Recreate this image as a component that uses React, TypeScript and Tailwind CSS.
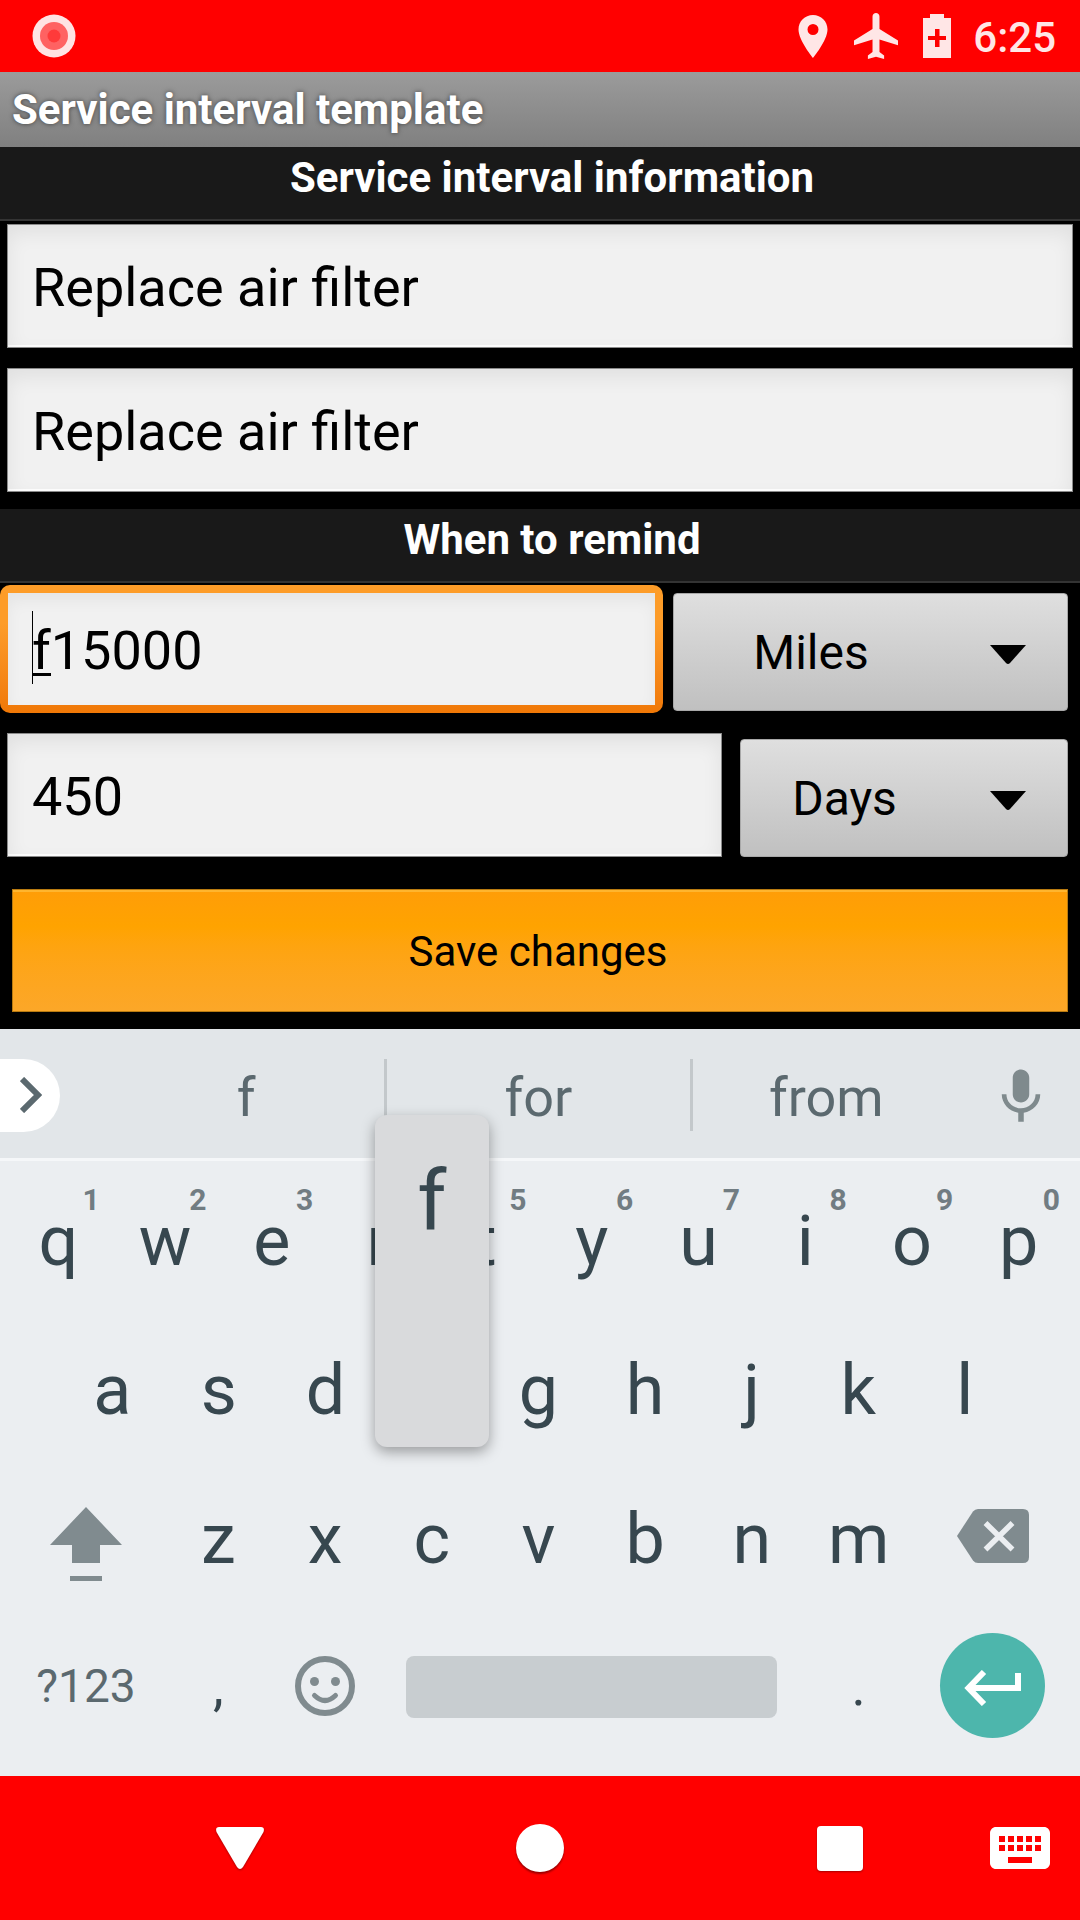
import React, { useState } from "react";
import { MdKeyboard } from "react-icons/md";

const digitHints: Record<string, string> = {
  q: "1", w: "2", e: "3", r: "4", t: "5", y: "6", u: "7", i: "8", o: "9", p: "0",
};

function StatusBar() {
  return (
    <header className="flex h-[72px] items-center justify-between bg-[#ff0000] pl-8 pr-6 text-[#ffe6e6]">
      <svg viewBox="0 0 44 44" className="size-11" role="img" aria-label="Recording">
        <circle cx="22" cy="22" r="21.5" fill="#ffe3e3" />
        <circle cx="22" cy="22" r="14" fill="#ff6262" />
        <circle cx="22" cy="22" r="6.5" fill="#ff3a3a" />
      </svg>
      <div className="flex items-center">
        <svg viewBox="0 0 30 44" className="mr-[26px] h-11 w-[30px]" fill="currentColor" role="img" aria-label="Location">
          <path fillRule="evenodd" d="M15 1C6.8 1 .5 7.400.5 15.500 .5 26.300 15 44 15 44S29.500 26.300 29.500 15.500C29.500 7.400 23.200 1 15 1zM15 21a5.500 5.500 0 1 1 0-11 5.500 5.500 0 0 1 0 11z" />
        </svg>
        <svg viewBox="2 2 19 20" preserveAspectRatio="none" className="mr-[25px] h-[46px] w-11" fill="currentColor" role="img" aria-label="Airplane mode">
          <path d="M21 16v-2l-8-5V3.500c0-.83-.67-1.500-1.500-1.500S10 2.670 10 3.500V9l-8 5v2l8-2.500V19l-2 1.500V22l3.500-1 3.500 1v-1.500L13 19v-5.500l8 2.500z" />
        </svg>
        <svg viewBox="0 0 28 44" className="mr-[22px] h-11 w-7" fill="currentColor" role="img" aria-label="Battery saver">
          <path fillRule="evenodd" d="M7 0H21V4H28V44H0V4H7zM12 15V22H5V26H12V33H16.500V26H23V22H16.500V15z" />
        </svg>
        <time className="pt-1 text-[42px] font-medium leading-[48px]">6:25</time>
      </div>
    </header>
  );
}

function SectionHeader({ children }: { children: React.ReactNode }) {
  return (
    <h2 className="h-[74px] border-b-2 border-[#333333] bg-[#191919] pl-6 pt-[7px] text-center text-[42px] font-bold leading-[48px] text-white">
      {children}
    </h2>
  );
}

const fieldClass =
  "block h-[124px] min-w-0 w-full border border-[#8a8a8a] bg-[#f1f1f1] px-6 pt-[3px] text-[54px] text-black outline-none shadow-[inset_0_8px_20px_rgba(0,0,0,0.07),inset_0_-2px_0_#ffffff]";

function UnitSelect({ label, options, className }: { label: string; options: string[]; className: string }) {
  return (
    <div className={className}>
      <select
        aria-label={label}
        className="block h-[118px] w-full appearance-none rounded-sm border border-[#a8a8a8] bg-linear-to-b from-[#dfdfdf] to-[#c0c0c0] pr-[119px] pt-0.5 text-center text-[48px] text-black outline-none [text-align-last:center]"
      >
        {options.map((o) => (
          <option key={o}>{o}</option>
        ))}
      </select>
      <svg viewBox="0 0 36 20" className="pointer-events-none absolute right-[42px] top-[52px] h-5 w-9" aria-hidden="true">
        <path d="M0 0H36L20 18Q18 20 16 18z" fill="#000" />
      </svg>
    </div>
  );
}

function Form() {
  const [miles, setMiles] = useState("f15000");
  return (
    <form className="flex-1 bg-black" onSubmit={(e) => e.preventDefault()}>
      <SectionHeader>Service interval information</SectionHeader>
      <div className="flex flex-col gap-5 px-[7px] pb-[17px] pt-[3px]">
        <input aria-label="Name" defaultValue="Replace air filter" className={fieldClass} />
        <input aria-label="Description" defaultValue="Replace air filter" className={fieldClass} />
      </div>
      <SectionHeader>When to remind</SectionHeader>
      <div className="flex items-start pr-3 pt-[2px]">
        <div className="relative mr-[10px] min-w-0 flex-1 rounded-[10px] bg-linear-to-b from-[#fd9c28] from-30% to-[#f07806] p-2">
          <input
            aria-label="Distance"
            value={miles}
            onChange={(e) => setMiles(e.target.value)}
            className="block h-[112px] w-full bg-[#f1f1f1] px-6 pt-0.5 text-[54px] text-black outline-none shadow-[inset_0_8px_16px_rgba(0,0,0,0.05)]"
          />
          <span className="absolute left-8 top-[26px] h-[73px] w-px bg-black" />
          <span className="absolute left-[33px] top-[88px] h-[3px] w-[18px] bg-black" />
        </div>
        <UnitSelect label="Distance unit" options={["Miles", "Kilometers"]} className="relative mt-2 w-[395px]" />
      </div>
      <div className="flex items-start pl-[7px] pr-3 pt-5">
        <input aria-label="Time" defaultValue="450" className={fieldClass} />
        <UnitSelect label="Time unit" options={["Days", "Months"]} className="relative ml-[18px] mt-[6px] w-[328px] shrink-0" />
      </div>
      <div className="px-3 pb-[17px] pt-8">
        <button
          type="submit"
          className="block h-[123px] w-full border border-[#b87a10] bg-linear-to-b from-[#ff9d08] via-[#ffa300] via-30% to-[#fca728] pr-1 pt-0.5 text-[42px] text-black shadow-[inset_0_2px_0_#ffb52e]"
        >
          Save changes
        </button>
      </div>
    </form>
  );
}

function Suggestions() {
  return (
    <div className="flex h-[132px] items-center border-b-[3px] border-[#f5f7f9] bg-[#e2e6e9] pt-[3px] text-[54px] text-[#5b696f]">
      <button aria-label="More" className="mr-12 flex h-[73px] w-[60px] items-center rounded-r-full bg-white pl-5">
        <svg viewBox="0 0 22 36" className="h-9 w-[22px]" fill="none" stroke="currentColor" strokeWidth="6" aria-hidden="true">
          <path d="M2 2L18 18L2 34" />
        </svg>
      </button>
      <button className="flex-[277] pt-1">f</button>
      <span className="h-[72px] w-[3px] bg-[#c3c8cb]" />
      <button className="flex-[303] pt-1">for</button>
      <span className="h-[72px] w-[3px] bg-[#c3c8cb]" />
      <button className="flex-[268] pt-1">from</button>
      <button aria-label="Voice input" className="flex w-[120px] justify-center pl-0.5 pt-1 text-[#7f8a8d]">
        <svg viewBox="0 0 24 24" className="size-[66px]" fill="currentColor" aria-hidden="true">
          <path d="M12 14c1.660 0 2.990-1.340 2.990-3L15 5c0-1.660-1.340-3-3-3S9 3.340 9 5v6c0 1.660 1.340 3 3 3zm5.300-3c0 3-2.540 5.100-5.300 5.100S6.700 14 6.700 11H5c0 3.410 2.720 6.230 6 6.720V21h2v-3.280c3.280-.48 6-3.300 6-6.720h-1.700z" />
        </svg>
      </button>
    </div>
  );
}

function Key({ char }: { char: string }) {
  const pressed = char === "f";
  return (
    <div className="relative flex">
      <button className="flex-1 pt-0.5 text-center text-[70px] leading-[80px]">{char}</button>
      {digitHints[char] && (
        <span className="absolute right-3 top-5 text-[30px] font-bold leading-none text-[#717c82]">{digitHints[char]}</span>
      )}
      {pressed && (
        <div className="absolute -left-1 -right-1 bottom-4 z-10 h-[332px] rounded-xl bg-[#d9dadc] pt-11 text-center text-[84px] leading-none shadow-[0_5px_14px_rgba(0,0,0,0.35)]">
          {char}
        </div>
      )}
    </div>
  );
}

function Keyboard() {
  return (
    <section aria-label="Keyboard" className="bg-[#ebeef1] text-[#37474f]">
      <Suggestions />
      <div className="pb-[15px] pt-1">
        <div className="grid h-[149px] grid-cols-10 pl-[5px] pr-2">
          {"qwertyuiop".split("").map((c) => <Key key={c} char={c} />)}
        </div>
        <div className="grid h-[149px] grid-cols-9 pl-[59px] pr-[62px]">
          {"asdfghjkl".split("").map((c) => <Key key={c} char={c} />)}
        </div>
        <div className="grid h-[149px] grid-cols-[3fr_repeat(7,2fr)_3fr] pl-[5px] pr-2">
          <button aria-label="Shift" className="flex items-center justify-center pl-0.5 pt-3">
            <svg viewBox="0 0 72 74" className="h-[74px] w-[72px]" fill="#808b8f" aria-hidden="true">
              <path d="M36 0L72 38H50V56H22V38H0zM20 69H52V74H20z" />
            </svg>
          </button>
          {"zxcvbnm".split("").map((c) => <Key key={c} char={c} />)}
          <button aria-label="Backspace" className="flex items-center justify-center pb-1 pl-0.5">
            <svg viewBox="0 0 72 54" className="h-[54px] w-[72px]" aria-hidden="true">
              <path d="M0 27L16 2.500Q18 0 21 0H66Q72 0 72 6V48Q72 54 66 54H21Q18 54 16 51.500z" fill="#808b8f" />
              <path d="M28.500 14L55.500 40.500M55.500 14L28.500 40.500" stroke="#ebeef1" strokeWidth="5.5" />
            </svg>
          </button>
        </div>
        <div className="grid h-[149px] grid-cols-[3fr_2fr_2fr_8fr_2fr_3fr] pl-[5px] pr-2">
          <button className="pl-0.5 text-[46px] text-[#5b696f]">?123</button>
          <button className="text-[54px]">,</button>
          <button aria-label="Emoji" className="flex items-center justify-center pb-0.5">
            <svg viewBox="0 0 60 60" className="size-[60px]" fill="#808b8f" aria-hidden="true">
              <circle cx="30" cy="30" r="27" fill="none" stroke="#808b8f" strokeWidth="6" />
              <circle cx="19.500" cy="25.500" r="4.500" />
              <circle cx="40.500" cy="25.500" r="4.500" />
              <path d="M19.500 39.500Q30 49.500 40.500 39.500" fill="none" stroke="#808b8f" strokeWidth="5" strokeLinecap="round" />
            </svg>
          </button>
          <button aria-label="Space" className="mx-7 h-[62px] self-center rounded-lg bg-[#c8cdd0]" />
          <button className="text-[54px]">.</button>
          <div className="flex items-center justify-center pb-0.5 pl-0.5">
            <button aria-label="Enter" className="flex size-[105px] items-center justify-center rounded-full bg-[#4db6ac]">
              <svg viewBox="0 0 58 36" className="mt-1 h-9 w-[58px]" fill="none" stroke="#fff" strokeWidth="6" aria-hidden="true">
                <path d="M5 18H54V3M20 2L4.500 18L20 34" />
              </svg>
            </button>
          </div>
        </div>
      </div>
    </section>
  );
}

function NavBar() {
  return (
    <nav className="flex h-36 items-center bg-[#ff0000] pl-[90px] pr-6 text-white">
      <button aria-label="Back" className="flex flex-1 justify-center">
        <svg viewBox="0 0 48 42" className="h-[42px] w-12 drop-shadow-[0_1px_1px_rgba(0,0,0,0.35)]" fill="currentColor" aria-hidden="true">
          <path d="M3 0H45Q49 0 47.500 5L27 40Q24 44 21 40L.5 5Q-1 0 3 0z" />
        </svg>
      </button>
      <button aria-label="Home" className="flex flex-1 justify-center">
        <span className="size-12 rounded-full bg-white shadow-[0_2px_2px_rgba(0,0,0,0.4)]" />
      </button>
      <button aria-label="Recents" className="flex flex-1 justify-center">
        <span className="h-[45px] w-[46px] rounded bg-white shadow-[0_1px_2px_rgba(0,0,0,0.35)]" />
      </button>
      <button aria-label="Switch keyboard" className="-ml-[6px]">
        <MdKeyboard size={72} />
      </button>
    </nav>
  );
}

export default function App() {
  return (
    <div className="flex min-h-screen flex-col overflow-hidden bg-black font-['Roboto',sans-serif]">
      <StatusBar />
      <h1 className="flex h-[75px] items-center bg-linear-to-b from-[#9b9b9b] to-[#808080] pl-3 text-[42px] font-bold text-white [text-shadow:0_0_5px_rgba(0,0,0,0.55)]">
        Service interval template
      </h1>
      <Form />
      <Keyboard />
      <NavBar />
    </div>
  );
}
